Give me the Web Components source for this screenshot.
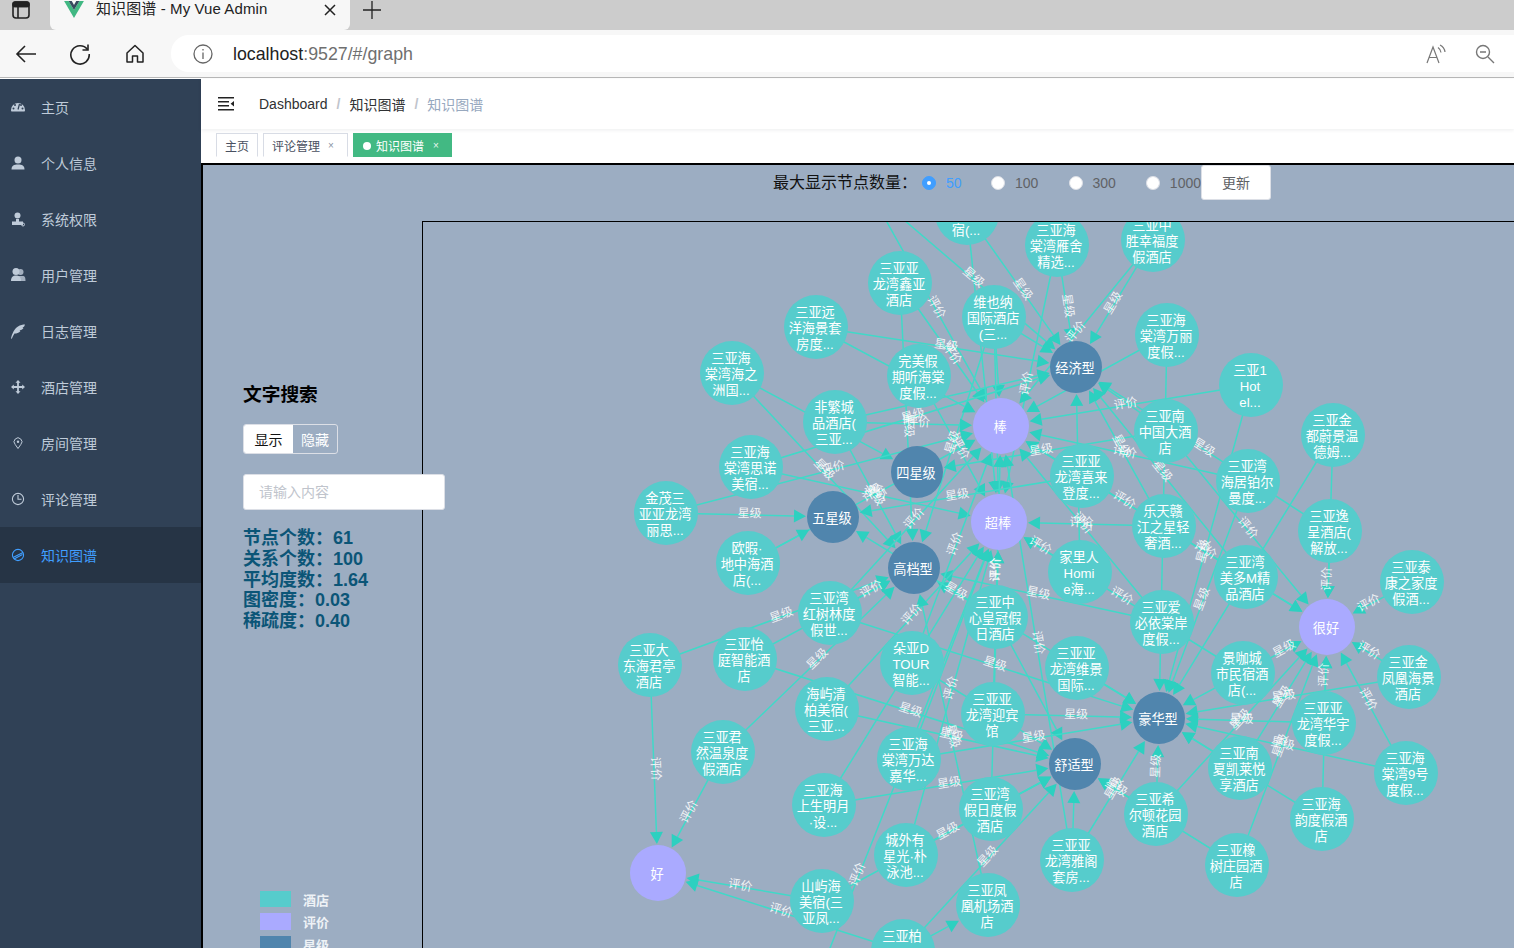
<!DOCTYPE html>
<html lang="zh">
<head>
<meta charset="utf-8">
<title>知识图谱 - My Vue Admin</title>
<style>
    html, body { margin: 0; height: 948px; overflow: hidden; }
    body { font-family: "Liberation Sans", "Noto Sans CJK SC", sans-serif; display: flex; flex-direction: column; }
    .app { display: flex; flex: 1; min-height: 0; }
    .main { flex: 1; display: flex; flex-direction: column; min-width: 0; }
</style>
</head>
<body>
<browser-chrome title-text="知识图谱 - My Vue Admin" host="localhost" path=":9527/#/graph"></browser-chrome>
<div class="app">
    <app-sidebar></app-sidebar>
    <div class="main">
        <app-navbar></app-navbar>
        <tags-view></tags-view>
        <graph-page>
            <limit-toolbar slot="toolbar"></limit-toolbar>
            <search-panel slot="side"></search-panel>
            <knowledge-graph slot="canvas"></knowledge-graph>
        </graph-page>
    </div>
</div>

<script>
class BrowserChrome extends HTMLElement {
    constructor() {
        super();
        this.attachShadow({ mode: 'open' });
    }

    connectedCallback() {
        const title = this.getAttribute('title-text');
        const host = this.getAttribute('host');
        const path = this.getAttribute('path');
        this.shadowRoot.innerHTML = `
            <style>
                :host { display: block; height: 79px; font-family: "Liberation Sans", "Noto Sans CJK SC", sans-serif; color: #222; }
                .strip { height: 30px; background: #cccccc; display: flex; align-items: center; }
                .win { width: 50px; box-sizing: border-box; padding-left: 11px; display: flex; }
                .tab { width: 300px; height: 30px; background: #f7f7f7; border-radius: 0 0 6px 6px; display: flex; align-items: center; box-sizing: border-box; padding-left: 14px; padding-bottom: 10px; }
                .tab .t { margin-left: 12px; font-size: 15px; letter-spacing: .1px; flex: 1; line-height: 18px; margin-top: -2px; }
                .tab svg.x { margin-right: 14px; }
                .plus { margin-left: 13px; margin-top: -10px; display: flex; }
                .bar { height: 48px; background: #f7f7f7; border-bottom: 1px solid #b8b8b8; display: flex; align-items: center; box-sizing: border-box; }
                .nav { width: 55px; display: flex; justify-content: center; }
                .nav.first { width: 52px; }
                .nav.home { padding-left: 1px; width: 54px; }
                .url { flex: 1; margin-left: 9px; height: 37px; background: #fff; border-radius: 18px 0 0 18px; display: flex; align-items: center; padding-left: 22px; }
                .addr { margin-left: 20px; margin-top: 1px; font-size: 17.8px; color: #6f6f6f; white-space: nowrap; }
                .addr b { font-weight: 400; color: #222; }
                .tools { margin-left: auto; display: flex; gap: 29px; padding-right: 19px; }
            </style>
            <div class="strip">
                <div class="win">
                    <svg width="20" height="20" viewBox="0 0 20 20" fill="none" stroke="#222" stroke-width="1.6" style="margin-top:-10px"><rect x="2" y="2" width="16" height="16" rx="3"/><path d="M2 6.5H18M7 6.5V18"/><rect x="2" y="2" width="16" height="4.5" rx="2" fill="#222"/></svg>
                </div>
                <div class="tab">
                    <svg width="20" height="18" viewBox="0 0 22 20"><path d="M0 0H5L11 10L17 0H22L11 19Z" fill="#41b883"/><path d="M5 0H8.5L11 4.5L13.5 0H17L11 10Z" fill="#35495e"/></svg>
                    <span class="t">${title}</span>
                    <svg class="x" width="12" height="12" viewBox="0 0 12 12" stroke="#222" stroke-width="1.5"><path d="M1 1L11 11M11 1L1 11"/></svg>
                </div>
                <div class="plus"><svg width="18" height="18" viewBox="0 0 18 18" stroke="#222" stroke-width="1.3"><path d="M9 0V18M0 9H18"/></svg></div>
            </div>
            <div class="bar">
                <div class="nav first"><svg width="22" height="20" viewBox="0 0 22 20" fill="none" stroke="#222" stroke-width="1.6"><path d="M21 10H2M10 2L2 10L10 18"/></svg></div>
                <div class="nav"><svg width="22" height="22" viewBox="0 0 22 22" fill="none" stroke="#222" stroke-width="1.6"><path d="M18.5 6.5A9.2 9.2 0 1 0 20.2 11"/><path d="M19 1.5V7H13.5"/></svg></div>
                <div class="nav home"><svg width="20" height="20" viewBox="0 0 20 20" fill="none" stroke="#222" stroke-width="1.5"><path d="M2 9L10 1.5L18 9V18H12.5V12H7.5V18H2Z" stroke-linejoin="round"/></svg></div>
                <div class="url">
                    <svg width="20" height="20" viewBox="0 0 20 20" fill="none" stroke="#666" stroke-width="1.3"><circle cx="10" cy="10" r="9"/><path d="M10 8.5V15M10 5V6.5"/></svg>
                    <span class="addr"><b>${host}</b>${path}</span>
                    <div class="tools">
                        <svg width="20" height="20" viewBox="0 0 20 20" fill="none" stroke="#777" stroke-width="1.2"><path d="M1 19L7 3L13 19M3.2 13.5H11"/><path d="M12 3.5A7 7 0 0 1 15 8.5M14 1A9 9 0 0 1 19 8"/></svg>
                        <svg width="20" height="20" viewBox="0 0 20 20" fill="none" stroke="#777" stroke-width="1.4"><circle cx="8" cy="8" r="6.5"/><path d="M13 13L19 19M5 8H11"/></svg>
                    </div>
                </div>
            </div>
        `;
    }
}
customElements.define('browser-chrome', BrowserChrome);

const MENU_ICONS = {
    gauge: '<path d="M1 11A7 7 0 1 1 15 11C15 12 14.6 12.5 14 12.5H2C1.4 12.5 1 12 1 11Z" fill="currentColor"/><circle cx="3.5" cy="9.5" r="1" fill="#304156"/><circle cx="5" cy="6" r="1" fill="#304156"/><circle cx="11" cy="6" r="1" fill="#304156"/><circle cx="12.5" cy="9.5" r="1" fill="#304156"/><path d="M8 10.5L9.5 5" stroke="#304156" stroke-width="1.2"/>',
    user: '<circle cx="8" cy="5" r="3.5" fill="currentColor"/><path d="M1.5 14.5C1.5 10.5 4 9.5 8 9.5S14.5 10.5 14.5 14.5Z" fill="currentColor"/>',
    tie: '<circle cx="7.5" cy="4.5" r="3" fill="currentColor"/><path d="M6 8H9V10.5H13V14H2V10.5H6Z" fill="currentColor"/><circle cx="13" cy="13.5" r="1.5" fill="none" stroke="currentColor"/>',
    users: '<circle cx="10.5" cy="5" r="3" fill="currentColor" opacity=".8"/><path d="M8 14V9H13.5C15 9.5 15.5 11 15.5 14Z" fill="currentColor" opacity=".8"/><circle cx="6" cy="4.5" r="3.5" fill="currentColor"/><path d="M1 14C1 10 3 8.5 6 8.5S11 10 11 14Z" fill="currentColor"/>',
    feather: '<path d="M1 15.5C2 11 4 6 8 3.5C10 2 13 1.5 15 1.5C14.5 3 14 4 12.5 4.5L13.5 5C12.5 6.5 11 7 9.5 7.5L10.5 8C9 10 6.5 10.5 4.5 10.5C3.5 12 2.5 14 1.8 15.8Z" fill="currentColor"/>',
    move: '<path d="M8 1L10.5 3.8H8.9V7.1H12.2V5.5L15 8L12.2 10.5V8.9H8.9V12.2H10.5L8 15L5.5 12.2H7.1V8.9H3.8V10.5L1 8L3.8 5.5V7.1H7.1V3.8H5.5Z" fill="currentColor"/>',
    pin: '<path d="M8 13.5L5.2 9.5A3.9 3.9 0 1 1 10.8 9.5Z" fill="none" stroke="currentColor" stroke-width="1"/><circle cx="8" cy="6.8" r="1.2" fill="currentColor"/>',
    clock: '<circle cx="8" cy="8" r="5.6" fill="none" stroke="currentColor" stroke-width="1.1"/><path d="M8 4V8.2H11.5" fill="none" stroke="currentColor" stroke-width="1.1"/>',
    compass: '<circle cx="8" cy="8" r="5.6" fill="none" stroke="currentColor" stroke-width="1.1"/><path d="M3 10.5L13 5.5M4 12L12.5 7.5" stroke="currentColor" stroke-width="1.2"/>'
};

class AppSidebar extends HTMLElement {
    constructor() {
        super();
        this.attachShadow({ mode: 'open' });
    }

    connectedCallback() {
        const items = [
            ['gauge', '主页'], ['user', '个人信息'], ['tie', '系统权限'], ['users', '用户管理'], ['feather', '日志管理'],
            ['move', '酒店管理'], ['pin', '房间管理'], ['clock', '评论管理'], ['compass', '知识图谱', true]
        ];
        this.shadowRoot.innerHTML = `
            <style>
                :host { display: block; width: 201px; flex: none; background: #304156; }
                .item { height: 56px; display: flex; align-items: center; padding-left: 10px; color: #bfcbd9; font-size: 14px; }
                .item svg { width: 16px; height: 16px; margin-right: 15px; margin-top: -1px; }
                .item.active { background: #263445; color: #409eff; }
            </style>
            ${items.map(([icon, text, active]) => `
                <div class="item ${active ? 'active' : ''}">
                    <svg viewBox="0 0 16 16">${MENU_ICONS[icon]}</svg><span>${text}</span>
                </div>`).join('')}
        `;
    }
}
customElements.define('app-sidebar', AppSidebar);

class AppNavbar extends HTMLElement {
    constructor() {
        super();
        this.attachShadow({ mode: 'open' });
    }

    connectedCallback() {
        this.shadowRoot.innerHTML = `
            <style>
                :host { display: flex; align-items: center; height: 50px; background: #fff; box-shadow: 0 1px 4px rgba(0,21,41,.08); font-size: 14px; color: #303133; position: relative; z-index: 1; }
                svg { margin-left: 17px; margin-right: 25px; }
                .sep { color: #c0c4cc; margin: 0 9px; font-weight: 700; }
                .last { color: #97a8be; }
            </style>
            <svg width="16" height="14" viewBox="0 0 16 14" fill="#222"><path d="M0 0H16V1.6H0ZM0 12H16V13.6H0ZM0 4H11V5.6H0ZM0 8H11V9.6H0ZM16 4V9.6L12.6 6.8Z"/></svg>
            <span>Dashboard</span><span class="sep">/</span><span>知识图谱</span><span class="sep">/</span><span class="last">知识图谱</span>
        `;
    }
}
customElements.define('app-navbar', AppNavbar);

class TagsView extends HTMLElement {
    constructor() {
        super();
        this.attachShadow({ mode: 'open' });
    }

    connectedCallback() {
        this.shadowRoot.innerHTML = `
            <style>
                :host { display: flex; gap: 5px; height: 34px; box-sizing: border-box; padding: 4px 0 0 15px; background: #fff; }
                .tag { height: 24px; box-sizing: border-box; border: 1px solid #d8dce5; border-bottom-color: #fff; padding: 1px 8px 0; font-size: 12px; color: #495060; display: flex; align-items: center; }
                .tag.closable { padding-right: 13px; }
                .x { font-size: 10px; margin-left: 8px; color: #8a93a3; }
                .tag.active { background: #42b983; border-color: #42b983; color: #fff; padding: 1px 12px 0 9px; }
                .tag.active .x { color: #e8f6ef; margin-left: 9px; }
                .dot { width: 8px; height: 8px; background: #fff; border-radius: 50%; margin-right: 5px; }
            </style>
            <div class="tag">主页</div>
            <div class="tag closable">评论管理<span class="x">×</span></div>
            <div class="tag active"><i class="dot"></i>知识图谱<span class="x">×</span></div>
        `;
    }
}
customElements.define('tags-view', TagsView);

class GraphPage extends HTMLElement {
    constructor() {
        super();
        this.attachShadow({ mode: 'open' });
    }

    connectedCallback() {
        this.shadowRoot.innerHTML = `
            <style>
                :host { display: flex; flex-direction: column; flex: 1; min-height: 0; background: #9cadc2; border-left: 2px solid #000; border-top: 2px solid #000; }
                .top { height: 56px; flex: none; }
                .body { flex: 1; display: flex; min-height: 0; }
                .side { width: 219px; flex: none; position: relative; z-index: 1; }
                .canvas { flex: 1; min-width: 0; overflow: hidden; border-left: 1px solid #000; border-top: 1px solid #000; }
            </style>
            <div class="top"><slot name="toolbar"></slot></div>
            <div class="body">
                <div class="side"><slot name="side"></slot></div>
                <div class="canvas"><slot name="canvas"></slot></div>
            </div>
        `;
    }
}
customElements.define('graph-page', GraphPage);

class LimitToolbar extends HTMLElement {
    constructor() {
        super();
        this.attachShadow({ mode: 'open' });
    }

    connectedCallback() {
        const options = ['50', '100', '300', '1000'];
        this.shadowRoot.innerHTML = `
            <style>
                :host { display: flex; align-items: flex-start; padding-left: 570px; }
                .title { font-size: 16px; color: #111; margin-right: 13px; line-height: 35px; width: 136px; white-space: nowrap; }
                .radio { display: flex; align-items: center; font-size: 14px; color: #606266; height: 35px; width: 77.5px; }
                .radio.on { width: 69px; }
                .radio:last-of-type { width: 55px; }
                .radio i { width: 14px; height: 14px; box-sizing: border-box; border-radius: 50%; background: #fff; border: 1px solid #dcdfe6; margin-right: 10px; display: flex; align-items: center; justify-content: center; }
                .radio.on { color: #409eff; }
                .radio.on i { background: #409eff; border-color: #409eff; }
                .radio.on i::after { content: ""; width: 4px; height: 4px; border-radius: 50%; background: #fff; }
                button { width: 70px; height: 35px; background: #fff; border: 1px solid #dcdfe6; border-radius: 3px; font-size: 14px; color: #606266; padding: 0 0 2px; font-family: "Liberation Sans", "Noto Sans CJK SC", sans-serif; }
            </style>
            <div class="title">最大显示节点数量：</div>
            ${options.map((o, i) => `<div class="radio ${i === 0 ? 'on' : ''}"><i></i>${o}</div>`).join('')}
            <button>更新</button>
        `;
    }
}
customElements.define('limit-toolbar', LimitToolbar);

class SearchPanel extends HTMLElement {
    constructor() {
        super();
        this.attachShadow({ mode: 'open' });
    }

    connectedCallback() {
        const stats = [['节点个数', '61'], ['关系个数', '100'], ['平均度数', '1.64'], ['图密度', '0.03'], ['稀疏度', '0.40']];
        const legend = [['酒店', '#56cccc'], ['评价', '#aaaaff'], ['星级', '#5085ad']];
        this.shadowRoot.innerHTML = `
            <style>
                :host { display: block; padding: 163px 0 0 40px; }
                h3 { margin: 0; font-size: 18.72px; line-height: 22px; color: #000; font-weight: 700; }
                .toggle { display: flex; width: 95px; height: 30px; margin-top: 18px; box-sizing: border-box; border: 1px solid #dcdfe6; border-radius: 3px; font-size: 14px; overflow: hidden; }
                .toggle span { display: flex; align-items: center; justify-content: center; padding-bottom: 1px; }
                .toggle .on { width: 49px; background: #fff; color: #111; }
                .toggle .off { flex: 1; color: #fff; }
                .input { width: 202px; height: 36px; margin-top: 20px; box-sizing: border-box; background: #fff; border: 1px solid #dcdfe6; border-radius: 3px; padding-left: 15px; font-size: 14px; line-height: 34px; color: #c0c4cc; }
                .stats { margin-top: 18px; font-size: 18px; line-height: 20.8px; font-weight: 700; color: #0b5577; }
                .legend { margin: 259px 0 0 17px; display: flex; flex-direction: column; gap: 6px; }
                .row { display: flex; align-items: center; gap: 12px; font-size: 13px; font-weight: 700; color: #eef2f6; height: 16.5px; }
                .row i { width: 31px; height: 16.5px; }
            </style>
            <h3>文字搜索</h3>
            <div class="toggle"><span class="on">显示</span><span class="off">隐藏</span></div>
            <div class="input">请输入内容</div>
            <div class="stats">${stats.map(([k, v]) => `<div>${k}：${v}</div>`).join('')}</div>
            <div class="legend">${legend.map(([k, c]) => `<div class="row"><i style="background:${c}"></i>${k}</div>`).join('')}</div>
        `;
    }
}
customElements.define('search-panel', SearchPanel);

// node positions are page coordinates, the svg viewBox starts at the canvas corner
const HOTELS = {
    t1: [869, 190],
    su: [967, 213, '', '', '宿(...'],
    yanshe: [1057, 245, '三亚海', '棠湾雁舍', '精选...'],
    zhong: [1153, 240, '三亚中', '胜幸福度', '假酒店'],
    xinya: [900, 283, '三亚亚', '龙湾鑫亚', '酒店'],
    vienna: [994, 317, '维也纳', '国际酒店', '(三...'],
    yuanyang: [816, 327, '三亚远', '洋海景套', '房度...'],
    haizhi: [732, 373, '三亚海', '棠湾海之', '洲国...'],
    wanmei: [919, 376, '完美假', '期听海棠', '度假...'],
    feifan: [835, 422, '非繁城', '品酒店(', '三亚...'],
    sinuo: [751, 467, '三亚海', '棠湾思诺', '美宿...'],
    jinmao: [666, 513, '金茂三', '亚亚龙湾', '丽思...'],
    ouxia: [748, 563, '欧暇·', '地中海酒', '店(...'],
    wanli: [1167, 335, '三亚海', '棠湾万丽', '度假...'],
    hot1: [1251, 385, '三亚1', 'Hot', 'el...'],
    jindu: [1333, 435, '三亚金', '都蔚景温', '德姆...'],
    nanzhong: [1166, 431, '三亚南', '中国大酒', '店'],
    haiju: [1248, 481, '三亚湾', '海居铂尔', '曼度...'],
    xilai: [1082, 476, '三亚亚', '龙湾喜来', '登度...'],
    letian: [1164, 526, '乐天赣', '江之星轻', '奢酒...'],
    yicheng: [1330, 531, '三亚逸', '呈酒店(', '解放...'],
    meiduo: [1246, 577, '三亚湾', '美多M精', '品酒店'],
    taikang: [1412, 582, '三亚泰', '康之家度', '假酒...'],
    jiali: [1080, 572, '家里人', 'Homi', 'e海...'],
    aibi: [1162, 622, '三亚爱', '必依棠岸', '度假...'],
    jingka: [1243, 673, '景咖城', '市民宿酒', '店(...'],
    weijing: [1077, 668, '三亚亚', '龙湾维景', '国际...'],
    jinfeng: [1409, 677, '三亚金', '凤凰海景', '酒店'],
    huayu: [1324, 723, '三亚亚', '龙湾华宇', '度假...'],
    nanxia: [1240, 768, '三亚南', '夏凯莱悦', '享酒店'],
    jiuhao: [1406, 773, '三亚海', '棠湾9号', '度假...'],
    xierdun: [1156, 814, '三亚希', '尔顿花园', '酒店'],
    yundu: [1322, 819, '三亚海', '韵度假酒', '店'],
    yage: [1072, 860, '三亚亚', '龙湾雅阁', '套房...'],
    xiangshu: [1237, 865, '三亚橡', '树庄园酒', '店'],
    hongshu: [830, 613, '三亚湾', '红树林度', '假世...'],
    huangguan: [996, 617, '三亚中', '心皇冠假', '日酒店'],
    dadong: [650, 665, '三亚大', '东海君亭', '酒店'],
    yiting: [745, 659, '三亚怡', '庭智能酒', '店'],
    duoya: [912, 663, '朵亚D', 'TOUR', '智能...'],
    haiyu: [827, 709, '海屿清', '柏美宿(', '三亚...'],
    yingbin: [993, 714, '三亚亚', '龙湾迎宾', '馆'],
    junran: [723, 752, '三亚君', '然温泉度', '假酒店'],
    wanda: [909, 759, '三亚海', '棠湾万达', '嘉华...'],
    shangsheng: [824, 805, '三亚海', '上生明月', '·设...'],
    jiari: [991, 809, '三亚湾', '假日度假', '酒店'],
    chengwai: [906, 855, '城外有', '星光·朴', '泳池...'],
    shanyu: [822, 901, '山屿海', '美宿(三', '亚凤...'],
    jichang: [988, 905, '三亚凤', '凰机场酒', '店'],
    bo: [903, 951, '三亚柏', '', ''],
    off: [719, 1228]
};

const TAGS = {
    jingji: [1076, 367, '经济型'], si: [917, 472, '四星级'], wu: [833, 517, '五星级'],
    gaodang: [914, 568, '高档型'], haohua: [1159, 718, '豪华型'], shushi: [1075, 764, '舒适型']
};

const RATINGS = {
    bang: [1001, 426, '棒'], chao: [999, 522, '超棒'], henhao: [1327, 627, '很好'], hao: [658, 873, '好']
};

const E = '评价', S = '星级';
const EDGES = [
    ['t1', 'jingji', S], ['t1', 'bang', E], ['su', 'jingji', S], ['su', 'chao', ''],
    ['yanshe', 'jingji', S], ['yanshe', 'chao', E], ['zhong', 'jingji', S], ['zhong', 'bang', E],
    ['xinya', 'bang', E], ['xinya', 'gaodang', S], ['vienna', 'jingji', ''], ['vienna', 'bang', ''],
    ['vienna', 'chao', ''], ['vienna', 'gaodang', S], ['yuanyang', 'jingji', S], ['yuanyang', 'bang', ''],
    ['haizhi', 'si', ''], ['haizhi', 'gaodang', S], ['wanmei', 'chao', E], ['feifan', 'bang', E],
    ['feifan', 'gaodang', S], ['feifan', 'jingji', ''], ['sinuo', 'chao', E], ['sinuo', 'jingji', S],
    ['jinmao', 'bang', E], ['jinmao', 'wu', S], ['ouxia', 'bang', E], ['ouxia', 'wu', ''],
    ['wanli', 'bang', ''], ['wanli', 'haohua', ''], ['hot1', 'bang', E], ['hot1', 'haohua', S],
    ['jindu', 'henhao', ''], ['jindu', 'haohua', ''], ['nanzhong', 'si', S], ['nanzhong', 'henhao', E],
    ['nanzhong', 'jingji', ''], ['haiju', 'bang', E], ['haiju', 'haohua', S], ['xilai', 'wu', S],
    ['xilai', 'henhao', E], ['xilai', 'bang', ''], ['letian', 'chao', E], ['letian', 'jingji', S],
    ['yicheng', 'jingji', S], ['yicheng', 'henhao', E], ['meiduo', 'jingji', S], ['meiduo', 'bang', E],
    ['meiduo', 'henhao', ''], ['taikang', 'henhao', E], ['jiali', 'jingji', ''], ['jiali', 'chao', E],
    ['aibi', 'bang', E], ['aibi', 'gaodang', S], ['jingka', 'chao', E], ['jingka', 'henhao', S],
    ['jingka', 'haohua', ''], ['weijing', 'haohua', ''], ['jinfeng', 'henhao', E], ['jinfeng', 'haohua', S],
    ['huayu', 'henhao', E], ['huayu', 'haohua', S], ['nanxia', 'haohua', ''], ['nanxia', 'henhao', S],
    ['jiuhao', 'henhao', E], ['jiuhao', 'haohua', S], ['xierdun', 'shushi', S], ['xierdun', 'haohua', S],
    ['xierdun', 'henhao', S], ['yundu', 'henhao', ''], ['yundu', 'haohua', ''], ['yage', 'haohua', S],
    ['yage', 'shushi', ''], ['yage', 'bang', E], ['xiangshu', 'henhao', S], ['xiangshu', 'shushi', ''],
    ['hongshu', 'bang', E], ['hongshu', 'gaodang', E], ['hongshu', 'haohua', S], ['huangguan', 'gaodang', S],
    ['huangguan', 'chao', E], ['huangguan', 'wu', ''], ['huangguan', 'shushi', ''], ['huangguan', 'haohua', ''],
    ['dadong', 'hao', E], ['dadong', 'gaodang', S], ['yiting', 'gaodang', ''], ['yiting', 'shushi', S],
    ['duoya', 'bang', E], ['duoya', 'shushi', ''], ['haiyu', 'chao', E], ['haiyu', 'shushi', S],
    ['yingbin', 'bang', E], ['yingbin', 'haohua', S], ['junran', 'hao', E], ['junran', 'gaodang', S],
    ['wanda', 'chao', ''], ['wanda', 'haohua', S], ['shangsheng', 'chao', ''], ['shangsheng', 'shushi', S],
    ['jiari', 'chao', ''], ['jiari', 'shushi', ''], ['chengwai', 'chao', E], ['chengwai', 'shushi', ''],
    ['shanyu', 'hao', E], ['shanyu', 'shushi', S], ['jichang', 'gaodang', S], ['bo', 'hao', E],
    ['bo', 'shushi', S], ['off', 'chao', E], ['bo', 'jichang', '']
];

class KnowledgeGraph extends HTMLElement {
    constructor() {
        super();
        this.attachShadow({ mode: 'open' });
    }

    connectedCallback() {
        this.render();
    }

    position(key) {
        if (HOTELS[key]) return { p: HOTELS[key], r: 32 };
        if (TAGS[key]) return { p: TAGS[key], r: 26 };
        return { p: RATINGS[key], r: 28 };
    }

    renderEdge([from, to, label]) {
        const a = this.position(from).p;
        const b = this.position(to);
        const dx = b.p[0] - a[0], dy = b.p[1] - a[1];
        const len = Math.hypot(dx, dy);
        const ux = dx / len, uy = dy / len;
        const tipX = b.p[0] - ux * (b.r + 1), tipY = b.p[1] - uy * (b.r + 1);
        const baseX = tipX - ux * 12, baseY = tipY - uy * 12;
        const arrow = `${tipX},${tipY} ${baseX - uy * 6.5},${baseY + ux * 6.5} ${baseX + uy * 6.5},${baseY - ux * 6.5}`;
        let text = '';
        if (label) {
            let angle = Math.atan2(dy, dx) * 180 / Math.PI;
            if (angle > 90) angle -= 180;
            if (angle < -90) angle += 180;
            const mx = (a[0] + b.p[0]) / 2, my = (a[1] + b.p[1]) / 2;
            text = `<text class="edge-label" transform="translate(${mx} ${my}) rotate(${angle})" y="-1">${label}</text>`;
        }
        return {
            line: `<line x1="${a[0]}" y1="${a[1]}" x2="${baseX}" y2="${baseY}"/><polygon points="${arrow}"/>`,
            text
        };
    }

    renderNode(p, r, fill) {
        const lines = p.slice(2);
        const top = p[1] - (lines.length - 1) * 8;
        const dy = lines.length === 1 ? 6 : 5.7;
        const texts = lines.map((t, i) => t ? `<text x="${p[0] - 1}" y="${top + i * 16 + dy}">${t}</text>` : '').join('');
        return `<g><circle cx="${p[0]}" cy="${p[1]}" r="${r}" fill="${fill}"/>${texts}</g>`;
    }

    render() {
        const edges = EDGES.map(e => this.renderEdge(e));
        this.shadowRoot.innerHTML = `
            <style>
                :host { display: block; width: 100%; height: 100%; }
                svg { display: block; }
                .links line { stroke: #40d9c8; stroke-width: 1.5; }
                .links polygon { fill: #2dd0c0; }
                .edge-label { fill: #fff; fill-opacity: .85; font-size: 12px; text-anchor: middle; dominant-baseline: middle; }
                .nodes text { fill: #fff; font-size: 13.2px; text-anchor: middle; }
            </style>
            <svg width="1091" height="726" viewBox="423 222 1091 726" font-family='"Liberation Sans", "Noto Sans CJK SC", sans-serif'>
                <g class="links">${edges.map(e => e.line).join('')}</g>
                <g>${edges.map(e => e.text).join('')}</g>
                <g class="nodes">
                    ${Object.values(HOTELS).map(p => this.renderNode(p, 32, '#56cccc')).join('')}
                    ${Object.values(TAGS).map(p => this.renderNode(p, 26, '#5085ad')).join('')}
                    ${Object.values(RATINGS).map(p => this.renderNode(p, 28, '#aaaaff')).join('')}
                </g>
            </svg>
        `;
    }
}
customElements.define('knowledge-graph', KnowledgeGraph);
</script>
</body>
</html>
